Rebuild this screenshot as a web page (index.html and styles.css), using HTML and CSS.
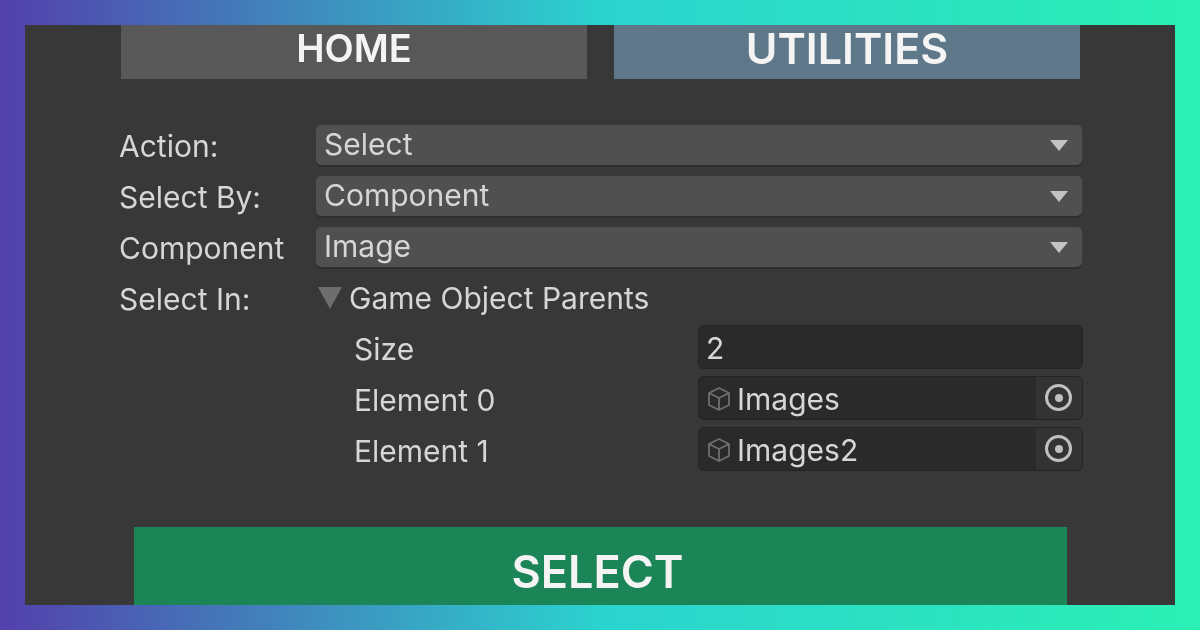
FILE: index.html
```html
<!DOCTYPE html>
<html lang="en">
<head>
    <meta charset="UTF-8">
    <title>Utilities</title>
    <link rel="stylesheet" href="styles.css">
</head>
<body>
    <div class="panel">
        <!-- Tabs, cut off by the top of the panel -->
        <div class="tabs">
            <div class="tab tab-home"><span>HOME</span></div>
            <div class="tab tab-utilities"><span>UTILITIES</span></div>
        </div>

        <div class="form">
            <div class="row">
                <span class="label">Action:</span>
                <div class="dropdown"><span>Select</span><i class="arrow"></i></div>
            </div>
            <div class="row">
                <span class="label">Select By:</span>
                <div class="dropdown"><span>Component</span><i class="arrow"></i></div>
            </div>
            <div class="row">
                <span class="label">Component</span>
                <div class="dropdown"><span>Image</span><i class="arrow"></i></div>
            </div>
            <div class="row">
                <span class="label">Select In:</span>
                <div class="foldout"><i class="fold-arrow"></i><span>Game Object Parents</span></div>
            </div>

            <div class="row">
                <span class="sub-label">Size</span>
                <div class="field"><span>2</span></div>
            </div>
            <div class="row">
                <span class="sub-label">Element 0</span>
                <div class="field object-field">
                    <svg class="cube" viewBox="0 0 26 26"><path d="M13 2 23 7v12l-10 5-10-5V7zM3 7l10 5 10-5M13 12v12"/></svg>
                    <span>Images</span>
                    <div class="picker"><i class="target"></i></div>
                </div>
            </div>
            <div class="row">
                <span class="sub-label">Element 1</span>
                <div class="field object-field">
                    <svg class="cube" viewBox="0 0 26 26"><path d="M13 2 23 7v12l-10 5-10-5V7zM3 7l10 5 10-5M13 12v12"/></svg>
                    <span>Images2</span>
                    <div class="picker"><i class="target"></i></div>
                </div>
            </div>
        </div>

        <div class="select-button"><span>SELECT</span></div>
    </div>
</body>
</html>
```

FILE: styles.css
```css
html, body {
    margin: 0;
    height: 100%;
}
body {
    box-sizing: border-box;
    height: 630px;
    padding: 25px;
    background: linear-gradient(90deg, #5340ac 0%, #2bd3cf 50%, #2bf0b4 100%);
    font-family: Inter, "Liberation Sans", sans-serif;
    overflow: hidden;
}
.panel {
    height: 580px;
    background-color: #383838;
    overflow: hidden;
    display: flex;
    flex-direction: column;
}
.tabs {
    display: flex;
    gap: 27px;
    padding: 0 95px 0 96px;
}
.tab {
    flex: 1;
    height: 54px;
    box-sizing: border-box;
    padding-bottom: 8px;
    display: flex;
    align-items: center;
    justify-content: center;
    color: #f4f4f4;
    font-size: 38px;
    font-weight: 600;
    line-height: 1;
}
.tab span {
    filter: blur(0.6px);
}
.tab-home {
    background-color: #585858;
}
.tab-utilities {
    background-color: #5f7889;
    font-size: 43px;
}
.form {
    display: flex;
    flex-direction: column;
    gap: 11px;
    padding: 46px 93px 0 94px;
    color: #d6d6d6;
    font-size: 30px;
}
.row {
    display: flex;
    align-items: center;
    height: 40px;
}
.label {
    width: 197px;
    flex-shrink: 0;
    white-space: nowrap;
    padding-top: 2px;
    filter: blur(0.7px);
}
.dropdown {
    flex: 1;
    height: 40px;
    box-sizing: border-box;
    display: flex;
    align-items: center;
    justify-content: space-between;
    padding: 0 14px 2px 8px;
    background-color: #505050;
    border-radius: 5px;
    box-shadow: 0 2px 0 #2e2e2e;
}
.dropdown span {
    filter: blur(0.7px);
}
.arrow {
    width: 0;
    height: 0;
    margin-top: 2px;
    border-left: 9px solid transparent;
    border-right: 9px solid transparent;
    border-top: 11px solid #c4c4c4;
    filter: blur(0.5px);
}
.foldout {
    display: flex;
    align-items: center;
    gap: 7px;
    padding-left: 2px;
}
.foldout span {
    filter: blur(0.7px);
}
.fold-arrow {
    width: 0;
    height: 0;
    border-left: 12px solid transparent;
    border-right: 12px solid transparent;
    border-top: 22px solid #6e6e6e;
    filter: blur(0.5px);
}
.sub-label {
    width: 344px;
    padding-left: 235px;
    flex-shrink: 0;
    filter: blur(0.7px);
}
.field {
    flex: 1;
    height: 44px;
    margin: 0 -1px 4px 0;
    box-sizing: border-box;
    display: flex;
    align-items: center;
    padding-left: 7px;
    background-color: #2a2a2a;
    border: 1px solid #242424;
    border-radius: 6px;
}
.field span {
    padding-top: 2px;
    filter: blur(0.7px);
}
.object-field {
    gap: 5px;
}
.cube {
    width: 26px;
    height: 26px;
    margin-top: 2px;
    fill: none;
    stroke: #6f6f6f;
    stroke-width: 1.8;
    stroke-linejoin: round;
    filter: blur(0.5px);
}
.picker {
    margin-left: auto;
    align-self: stretch;
    width: 46px;
    display: flex;
    align-items: center;
    justify-content: center;
    background-color: #333333;
    border-radius: 0 5px 5px 0;
}
.target {
    box-sizing: border-box;
    width: 27px;
    height: 27px;
    margin: -1px 1px 0 0;
    border: 3px solid #c0c0c0;
    border-radius: 50%;
    display: flex;
    align-items: center;
    justify-content: center;
    filter: blur(0.5px);
}
.target::before {
    content: "";
    width: 8px;
    height: 8px;
    border-radius: 50%;
    background-color: #c0c0c0;
}
.select-button {
    flex-shrink: 0;
    height: 88px;
    margin: 56px 108px 0 109px;
    padding-right: 6px;
    box-sizing: border-box;
    display: flex;
    align-items: center;
    justify-content: center;
    background-color: #1c8558;
    color: #f4f4f4;
    font-size: 45px;
    font-weight: 600;
}
.select-button span {
    filter: blur(0.6px);
}
```
